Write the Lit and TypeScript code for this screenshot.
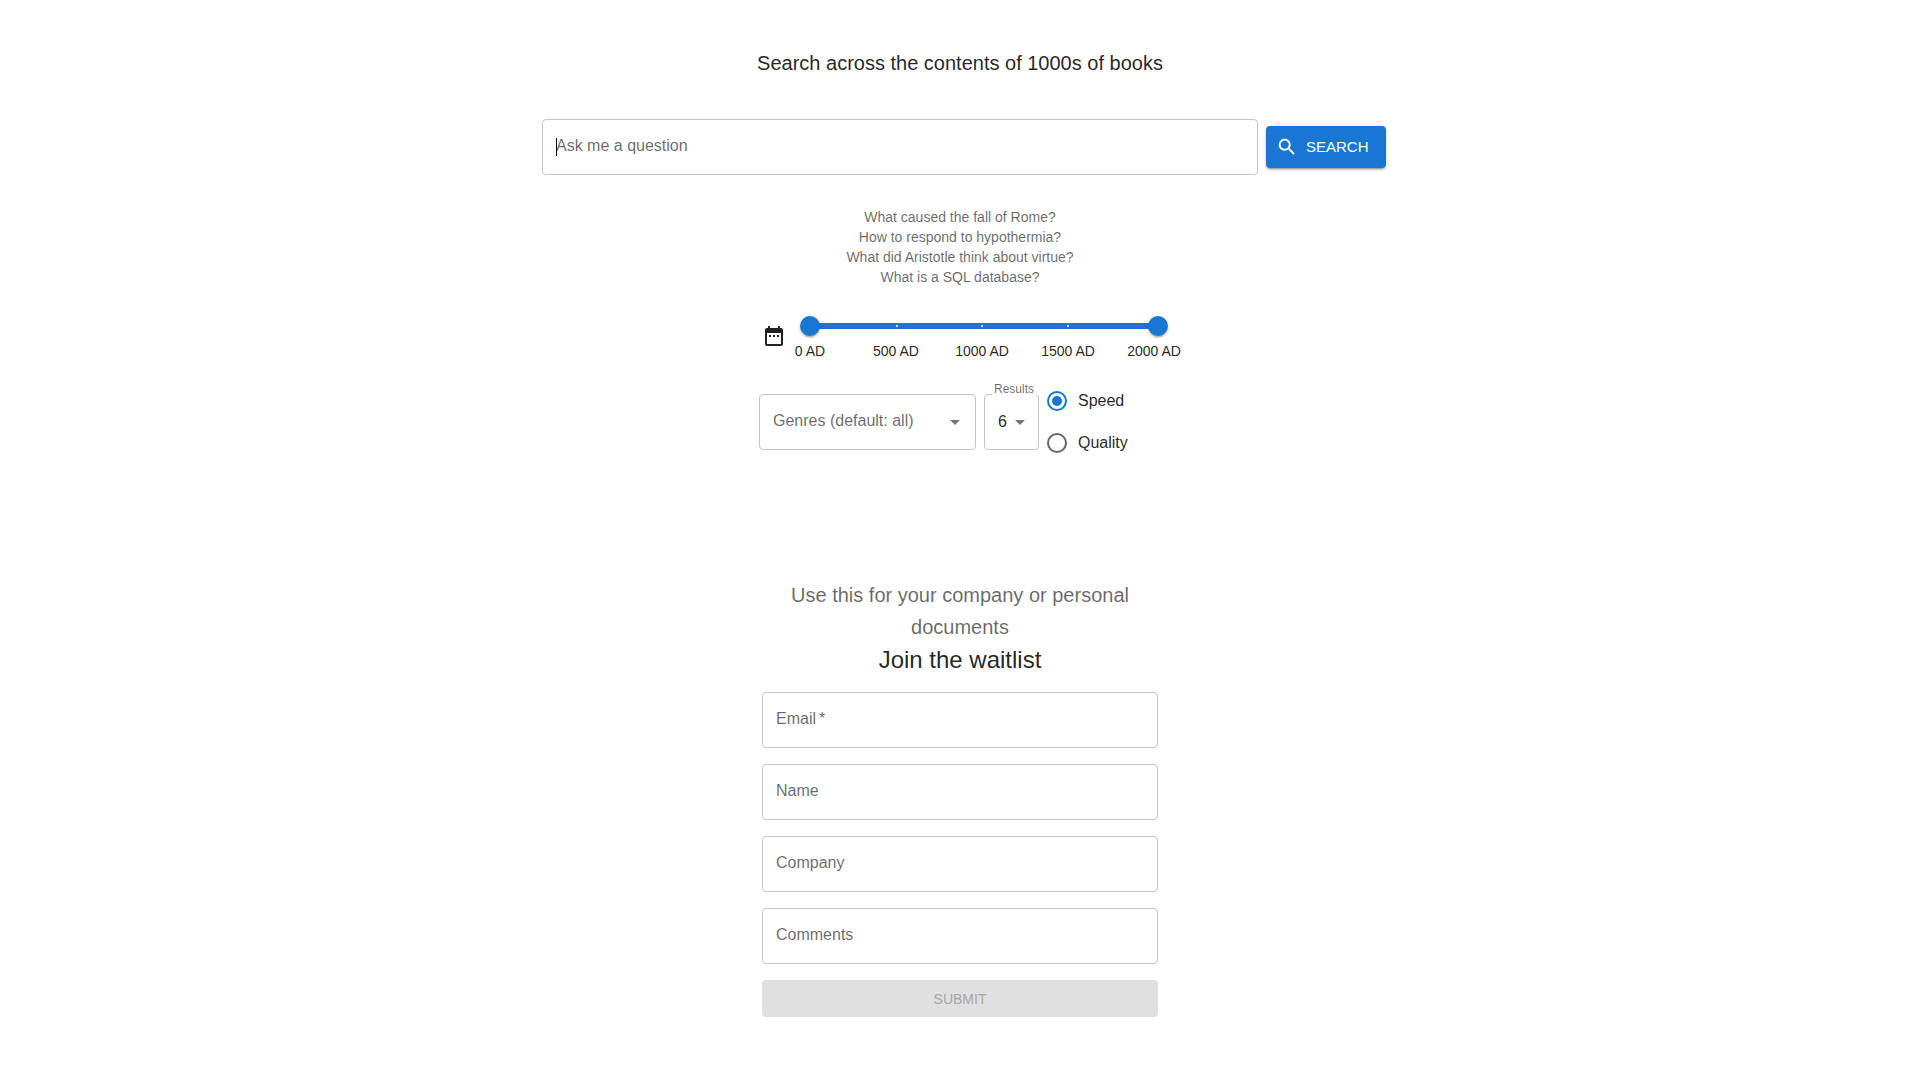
import { LitElement, html, css, nothing } from "lit";
import { customElement, state } from "lit/decorators.js";

interface Field {
  id: string;
  label: string;
  type: string;
  required?: boolean;
}

const SUGGESTIONS = [
  "What caused the fall of Rome?",
  "How to respond to hypothermia?",
  "What did Aristotle think about virtue?",
  "What is a SQL database?",
];

const FIELDS: Field[] = [
  { id: "email", label: "Email", type: "email", required: true },
  { id: "name", label: "Name", type: "text" },
  { id: "company", label: "Company", type: "text" },
  { id: "comments", label: "Comments", type: "text" },
];

const RESULT_COUNTS = [3, 6, 9, 12];
const YEAR_MARKS = [0, 500, 1000, 1500, 2000];
const MAX_YEAR = 2023;

@customElement("app-root")
export class AppRoot extends LitElement {
  @state() private from = 0;
  @state() private to = MAX_YEAR;
  @state() private question = "";
  @state() private email = "";

  static styles = css`
    :host {
      display: block;
      min-height: 100vh;
      background: #fff;
      color: rgba(0, 0, 0, 0.87);
      font-family: "Liberation Sans", Helvetica, Arial, sans-serif;
      font-size: 16px;
      line-height: 24px;
    }
    *,
    *::before,
    *::after {
      box-sizing: border-box;
    }
    input,
    select,
    button {
      margin: 0;
      font: inherit;
      color: inherit;
    }
    .page {
      display: flex;
      flex-direction: column;
      align-items: center;
      padding: 47px 16px 48px;
    }
    .title,
    .pitch,
    .join {
      margin: 0;
      font-weight: 400;
      font-size: 20px;
      line-height: 32px;
      text-align: center;
    }
    .pitch {
      color: rgba(0, 0, 0, 0.6);
    }
    .join {
      margin-top: 1px;
      font-size: 24px;
    }

    .search {
      display: flex;
      align-items: center;
      gap: 8px;
      width: 100%;
      max-width: 852px;
      margin-top: 40px;
      padding-left: 8px;
    }
    .search .field {
      flex: 1;
    }
    .search-button {
      display: flex;
      align-items: center;
      gap: 8px;
      min-width: 120px;
      height: 42px;
      padding: 0 14px 0 10px;
      border: 0;
      border-radius: 4px;
      background: #1976d2;
      color: #fff;
      font-size: 15px;
      text-transform: uppercase;
      cursor: pointer;
      box-shadow: 0 3px 1px -2px rgba(0, 0, 0, 0.2),
        0 2px 2px 0 rgba(0, 0, 0, 0.14), 0 1px 5px 0 rgba(0, 0, 0, 0.12);
    }
    .search-button svg {
      width: 22px;
      height: 22px;
    }
    svg {
      display: block;
      fill: currentColor;
    }

    /* Outlined field: label, control and arrow share one grid cell. */
    .field {
      position: relative;
      display: grid;
      align-items: center;
      height: 56px;
    }
    .field > * {
      grid-area: 1 / 1;
    }
    .control {
      width: 100%;
      height: 56px;
      min-width: 0;
      padding: 0 13px;
      border: 1px solid #c4c4c4;
      border-radius: 4px;
      background: transparent;
      outline: 0;
      appearance: none;
    }
    .control:focus {
      border-color: #1976d2;
    }
    .label {
      justify-self: start;
      padding: 0 14px 2px;
      color: rgba(0, 0, 0, 0.6);
      pointer-events: none;
    }
    input.control:not(:placeholder-shown) ~ .label {
      visibility: hidden;
    }
    .star {
      margin-left: 3px;
    }
    .caret {
      justify-self: start;
      width: 1px;
      height: 18px;
      margin-left: 14px;
      background: #000;
      pointer-events: none;
    }
    .control:focus ~ .caret {
      display: none;
    }
    .arrow {
      justify-self: end;
      width: 24px;
      height: 24px;
      margin-right: 7px;
      color: rgba(0, 0, 0, 0.54);
      pointer-events: none;
    }

    .suggestions {
      margin: 32px 0 0;
      padding: 0;
      list-style: none;
      color: rgba(0, 0, 0, 0.6);
      font-size: 14px;
      line-height: 20px;
      text-align: center;
    }

    .years {
      display: flex;
      align-items: flex-start;
      gap: 24px;
      width: 100%;
      max-width: 396px;
      margin-top: 29px;
    }
    .years-icon {
      width: 24px;
      height: 24px;
      margin-top: 8px;
    }
    .slider {
      flex: 1;
    }
    .rail {
      display: grid;
      align-items: center;
      height: 20px;
    }
    .rail > * {
      grid-area: 1 / 1;
    }
    .track {
      height: 6px;
      border-radius: 3px;
      background: #a7caed;
    }
    .span {
      height: 6px;
      border-radius: 3px;
      background: #1976d2;
    }
    .ticks,
    .tick-labels {
      display: flex;
      justify-content: space-between;
    }
    .tick {
      width: 2px;
      height: 2px;
      border-radius: 1px;
      background: #fff;
    }
    .tick-labels {
      margin-top: 5px;
      font-size: 14px;
      line-height: 20px;
      white-space: nowrap;
    }
    .tick-label {
      display: flex;
      justify-content: center;
      width: 0;
    }
    .thumb {
      height: 20px;
      margin: 0 -10px;
      background: transparent;
      appearance: none;
      outline: 0;
      pointer-events: none;
    }
    .thumb::-webkit-slider-thumb {
      width: 20px;
      height: 20px;
      border: 0;
      border-radius: 50%;
      background: #1976d2;
      box-shadow: 0 3px 1px -2px rgba(0, 0, 0, 0.2),
        0 2px 2px 0 rgba(0, 0, 0, 0.14), 0 1px 5px 0 rgba(0, 0, 0, 0.12);
      appearance: none;
      pointer-events: auto;
      cursor: pointer;
    }

    .options {
      display: flex;
      align-items: center;
      gap: 8px;
      width: 100%;
      max-width: 402px;
      margin-top: 19px;
    }
    .genres {
      flex: 0 1 217px;
    }
    .genres .control {
      color: rgba(0, 0, 0, 0.6);
      padding-bottom: 2px;
    }
    .genres .arrow {
      margin-right: 9px;
    }
    .results {
      flex: 0 0 55px;
    }
    .floating {
      position: absolute;
      top: -13px;
      left: 8px;
      padding: 0 2px;
      background: #fff;
      color: rgba(0, 0, 0, 0.6);
      font-size: 12px;
      line-height: 16px;
    }
    .modes {
      margin: 0;
      padding: 0;
      border: 0;
    }
    .mode {
      display: flex;
      align-items: center;
      gap: 11px;
      height: 42px;
      cursor: pointer;
    }
    .radio {
      display: grid;
      place-items: center;
      width: 20px;
      height: 20px;
      border: 2px solid rgba(0, 0, 0, 0.6);
      border-radius: 50%;
      appearance: none;
    }
    .radio:checked {
      border-color: #1976d2;
    }
    .radio:checked::before {
      content: "";
      width: 10px;
      height: 10px;
      border-radius: 50%;
      background: #1976d2;
    }

    .waitlist {
      display: flex;
      flex-direction: column;
      gap: 16px;
      width: 100%;
      max-width: 396px;
      margin-top: 115px;
    }
    .submit {
      height: 37px;
      border: 0;
      border-radius: 4px;
      background: #1976d2;
      color: #fff;
      font-size: 14px;
      text-transform: uppercase;
    }
    .submit:disabled {
      background: #e0e0e0;
      color: #a6a6a6;
    }
  `;

  private arrow() {
    return html`<svg class="arrow" viewBox="0 0 24 24" aria-hidden="true">
      <path d="M7 10l5 5 5-5z" />
    </svg>`;
  }

  private renderField(f: Field) {
    return html`<div class="field">
      <input
        class="control"
        id=${f.id}
        type=${f.type}
        placeholder=" "
        ?required=${f.required}
        @input=${(e: Event) => {
          if (f.id === "email") this.email = (e.target as HTMLInputElement).value;
        }}
      />
      <label class="label" for=${f.id}
        >${f.label}${f.required
          ? html`<span class="star" aria-hidden="true">*</span>`
          : nothing}</label
      >
    </div>`;
  }

  private renderYears() {
    const left = (this.from / MAX_YEAR) * 100;
    const right = 100 - (this.to / MAX_YEAR) * 100;
    const scale = `width: ${(YEAR_MARKS[YEAR_MARKS.length - 1] / MAX_YEAR) * 100}%`;
    return html`<div class="years">
      <svg class="years-icon" viewBox="0 0 24 24" aria-hidden="true">
        <path
          d="M9 11H7v2h2v-2zm4 0h-2v2h2v-2zm4 0h-2v2h2v-2zm2-7h-1V2h-2v2H8V2H6v2H5c-1.11 0-1.99.9-1.99 2L3 20c0 1.1.89 2 2 2h14c1.1 0 2-.9 2-2V6c0-1.1-.9-2-2-2zm0 16H5V9h14v11z"
        />
      </svg>
      <div class="slider">
        <div class="rail">
          <div class="track"></div>
          <div class="span" style="margin: 0 ${right}% 0 ${left}%"></div>
          <div class="ticks" style=${scale}>
            ${YEAR_MARKS.map(() => html`<span class="tick"></span>`)}
          </div>
          <input
            class="thumb"
            type="range"
            aria-label="From year"
            min="0"
            max=${MAX_YEAR}
            .value=${String(this.from)}
            @input=${(e: Event) =>
              (this.from = Math.min(this.to, +(e.target as HTMLInputElement).value))}
          />
          <input
            class="thumb"
            type="range"
            aria-label="To year"
            min="0"
            max=${MAX_YEAR}
            .value=${String(this.to)}
            @input=${(e: Event) =>
              (this.to = Math.max(this.from, +(e.target as HTMLInputElement).value))}
          />
        </div>
        <div class="tick-labels" style=${scale}>
          ${YEAR_MARKS.map((y) => html`<span class="tick-label">${y} AD</span>`)}
        </div>
      </div>
    </div>`;
  }

  render() {
    return html`<main class="page">
      <h1 class="title">Search across the contents of 1000s of books</h1>

      <form class="search" @submit=${(e: Event) => e.preventDefault()}>
        <div class="field">
          <input
            class="control"
            id="question"
            type="text"
            placeholder=" "
            .value=${this.question}
            @input=${(e: Event) => (this.question = (e.target as HTMLInputElement).value)}
          />
          <label class="label" for="question">Ask me a question</label>
          ${this.question ? nothing : html`<span class="caret" aria-hidden="true"></span>`}
        </div>
        <button class="search-button" type="submit">
          <svg viewBox="0 0 24 24" aria-hidden="true">
            <path
              d="M15.5 14h-.79l-.28-.27C15.41 12.59 16 11.11 16 9.5 16 5.91 13.09 3 9.5 3S3 5.91 3 9.5 5.91 16 9.5 16c1.61 0 3.09-.59 4.23-1.57l.27.28v.79l5 4.99L20.49 19l-4.99-5zm-6 0C7.01 14 5 11.99 5 9.5S7.01 5 9.5 5 14 7.01 14 9.5 11.99 14 9.5 14z"
            />
          </svg>
          Search
        </button>
      </form>

      <ul class="suggestions">
        ${SUGGESTIONS.map((s) => html`<li>${s}</li>`)}
      </ul>

      ${this.renderYears()}

      <div class="options">
        <div class="field genres">
          <select class="control" aria-label="Genres">
            <option value="">Genres (default: all)</option>
          </select>
          ${this.arrow()}
        </div>
        <div class="field results">
          <select class="control" id="results">
            ${RESULT_COUNTS.map(
              (n) => html`<option value=${n} ?selected=${n === 6}>${n}</option>`
            )}
          </select>
          <label class="floating" for="results">Results</label>
          ${this.arrow()}
        </div>
        <fieldset class="modes" aria-label="Search mode">
          <label class="mode">
            <input class="radio" type="radio" name="mode" value="speed" checked />
            Speed
          </label>
          <label class="mode">
            <input class="radio" type="radio" name="mode" value="quality" />
            Quality
          </label>
        </fieldset>
      </div>

      <form class="waitlist" @submit=${(e: Event) => e.preventDefault()}>
        <header>
          <p class="pitch">Use this for your company or personal documents</p>
          <h2 class="join">Join the waitlist</h2>
        </header>
        ${FIELDS.map((f) => this.renderField(f))}
        <button class="submit" type="submit" ?disabled=${!this.email}>Submit</button>
      </form>
    </main>`;
  }
}
